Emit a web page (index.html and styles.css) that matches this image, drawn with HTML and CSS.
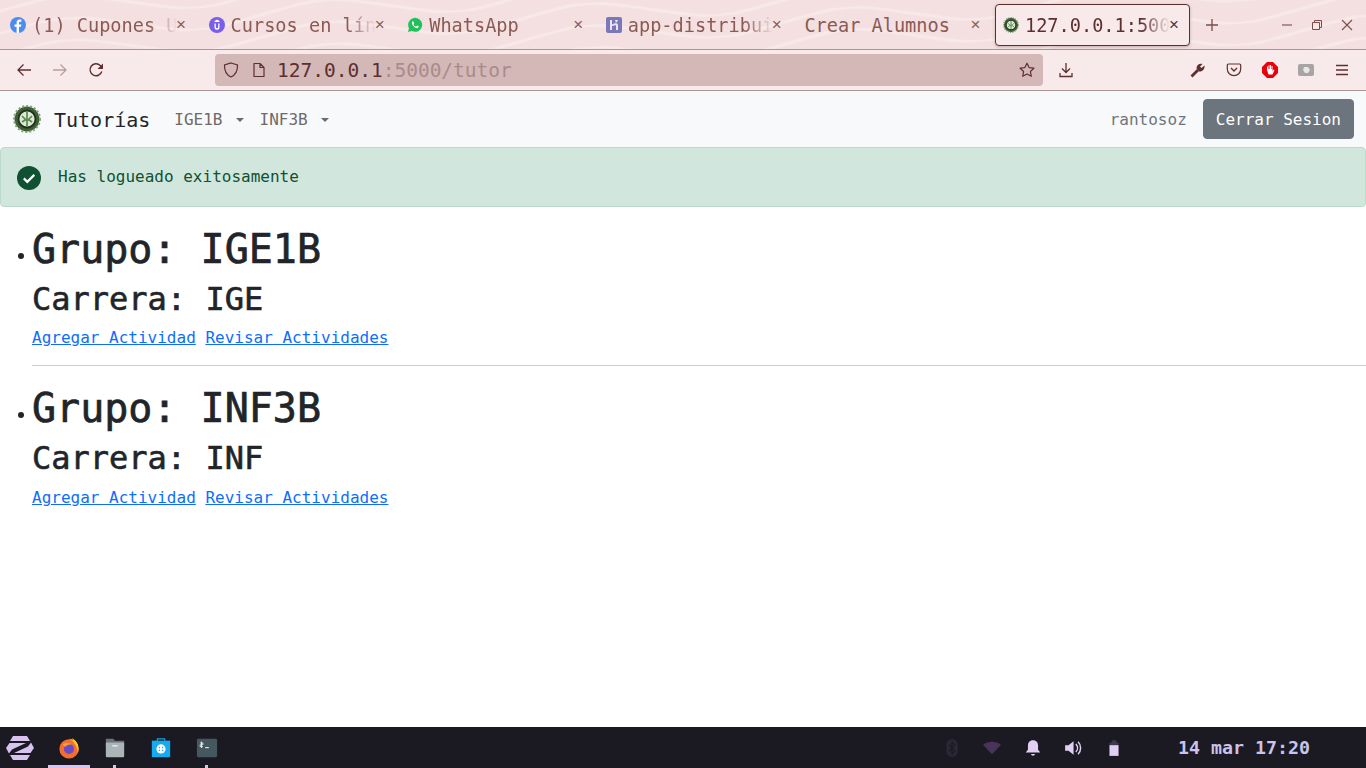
FILE: index.html
```html
<!DOCTYPE html>
<html lang="es">
<head>
  <meta charset="UTF-8" />
  <title>Tutorías</title>
  <link rel="stylesheet" href="styles.css">
</head>
<body>
  <svg class="defs" width="0" height="0">
    <symbol id="logo" viewBox="0 0 28 28">
      <circle cx="14" cy="14" r="12.5" fill="#3f5f35"/>
      <circle cx="14" cy="14" r="13" fill="none" stroke="#8aa082" stroke-width="2" stroke-dasharray="2 2"/>
      <circle cx="14" cy="14" r="8.500" fill="#dfe8d8"/>
      <circle cx="14" cy="14" r="8.500" fill="none" stroke="#1f3319" stroke-width="1.800"/>
      <path d="M14 7v14M9 11l5 5 5-5M9 17l3-2M19 17l-3-2" fill="none" stroke="#5b8a4c" stroke-width="1.700"/>
    </symbol>
    <pattern id="waves" width="260" height="22" patternUnits="userSpaceOnUse" patternTransform="rotate(-4)">
      <path d="M0 11C65-3 65-3 130 11S195 25 260 11" fill="none" stroke="#f8e9e9" stroke-width="3"/>
    </pattern>
  </svg>

  <header class="tabbar">
    <svg class="tabbar-bg" width="100%" height="100%"><rect width="100%" height="100%" fill="url(#waves)"/></svg>
    <div class="tab">
      <svg class="favicon" viewBox="0 0 16 16"><circle cx="8" cy="8" r="8" fill="#4a8cf0"/><path d="M9 16V9.800h2l.4-2.400H9V6c0-.8.3-1.200 1.200-1.200h1.200V2.700C11 2.600 10.300 2.500 9.600 2.500 7.800 2.500 6.600 3.600 6.600 5.600v1.800H4.500v2.400h2.100V16z" fill="#fff"/></svg>
      <span class="tab-title">(1) Cupones Udemy</span>
      <span class="tab-close">×</span>
    </div>
    <div class="tab">
      <svg class="favicon" viewBox="0 0 16 16"><circle cx="8" cy="8" r="8" fill="#7a5ee8"/><path d="M5.500 6.500v3.700a2.500 2.500 0 0 0 5 0V6.500H9.200v3.500a1.200 1.200 0 0 1-2.400 0V6.500zM8 2.600l2.500 1.500v1H5.500v-1z" fill="#fff"/></svg>
      <span class="tab-title">Cursos en línea</span>
      <span class="tab-close">×</span>
    </div>
    <div class="tab">
      <svg class="favicon" viewBox="0 0 16 16"><path d="M1 15l1-3.800A7 7 0 1 1 4.800 14z" fill="#1fc15b"/><path d="M5.600 4.300c-1 .8-1 2.200 0 3.700 1 1.500 2.400 2.800 3.900 3.100 1.300.2 2.300-.5 2.400-1.500l-1.800-1-.8.800C8.300 9.900 7 8.700 6.500 7.500l.7-.9-.8-2.100z" fill="#fff"/></svg>
      <span class="tab-title">WhatsApp</span>
      <span class="tab-close">×</span>
    </div>
    <div class="tab">
      <svg class="favicon" viewBox="0 0 16 16"><rect width="16" height="16" rx="2" fill="#7b78b8"/><path d="M4 3h2v4.500c2-.9 4-1.500 5-1 1 .4 1 1.300 1 2.500v4h-2V9c0-1-1-.9-4 .3V13H4zM9 3h3c-.2 1-.7 1.800-1.500 2.400H9.300C9.800 4.700 9.200 3.800 9 3z" fill="#e6e6f4"/></svg>
      <span class="tab-title">app-distribuida</span>
      <span class="tab-close">×</span>
    </div>
    <div class="tab">
      <span class="tab-title tab-title-full">Crear Alumnos</span>
      <span class="tab-close">×</span>
    </div>
    <div class="tab tab-active">
      <svg class="favicon"><use href="#logo"/></svg>
      <span class="tab-title">127.0.0.1:5000/tutor</span>
      <span class="tab-close">×</span>
    </div>
    <svg class="new-tab" viewBox="0 0 14 14"><path d="M7 1v12M1 7h12" stroke="#7a4d4d" stroke-width="1.300" fill="none"/></svg>
    <div class="window-controls">
      <svg viewBox="0 0 12 12"><path d="M1 6h10" stroke="#7a4d4d" stroke-width="1.100"/></svg>
      <svg viewBox="0 0 12 12"><path d="M1.500 3.500h7v7h-7zM3.500 3.500v-2h7v7h-2" fill="none" stroke="#7a4d4d"/></svg>
      <svg viewBox="0 0 12 12"><path d="M1 1l10 10M11 1L1 11" stroke="#7a4d4d" stroke-width="1.100"/></svg>
    </div>
  </header>

  <div class="toolbar">
    <button class="tool"><svg viewBox="0 0 16 16"><path d="M15 8H2M7.500 2.500L2 8l5.500 5.500" fill="none" stroke="#5d2f2f" stroke-width="1.300"/></svg></button>
    <button class="tool"><svg viewBox="0 0 16 16"><path d="M1 8h13M8.500 2.500L14 8l-5.500 5.500" fill="none" stroke="#b99c9c" stroke-width="1.300"/></svg></button>
    <button class="tool"><svg viewBox="0 0 16 16"><path d="M13.800 9.500A6 6 0 1 1 12.300 3.500L14.500 6" fill="none" stroke="#5d2f2f" stroke-width="1.400"/><path d="M15 1.500v5.500H9.500z" fill="#5d2f2f"/></svg></button>
    <div class="urlbar">
      <svg class="url-icon" viewBox="0 0 16 16"><path d="M8 1l6.500 2c.2 5.500-1.800 9.800-6.500 12C3.300 12.800 1.300 8.500 1.500 3z" fill="none" stroke="#5d2f2f" stroke-width="1.200"/></svg>
      <svg class="url-icon url-page" viewBox="0 0 16 16"><path d="M3 1.500h6l4 4v9H3zM9 1.500v4h4" fill="none" stroke="#5d2f2f" stroke-width="1.200" stroke-linejoin="round"/></svg>
      <span class="url-text">127.0.0.1<span class="url-dim">:5000/tutor</span></span>
      <svg class="url-icon" viewBox="0 0 16 16"><path d="M8 1.200l2.100 4.400 4.800.6-3.500 3.300.9 4.800L8 12l-4.300 2.300.9-4.800L1.100 6.200l4.800-.6z" fill="none" stroke="#5d2f2f" stroke-width="1.200" stroke-linejoin="round"/></svg>
    </div>
    <button class="tool"><svg viewBox="0 0 16 16"><path d="M8 1v9M4 6.500L8 10.500l4-4M2 11v3.500h12V11" fill="none" stroke="#5d2f2f" stroke-width="1.300"/></svg></button>
    <div class="tool-gap"></div>
    <button class="tool"><svg viewBox="0 0 16 16"><path d="M1.500 14.500L8 8" stroke="#5d2f2f" stroke-width="2.800"/><path d="M6.500 6.500C6.500 3 9.500 1 12.500 2L10 4.500 11.500 6 14.500 3.500C15 7 12.500 10 9 9.500z" fill="#5d2f2f"/></svg></button>
    <button class="tool"><svg viewBox="0 0 16 16"><path d="M2.500 2h11c.8 0 1.200.5 1.200 1.200V7a6.700 6.700 0 0 1-13.400 0V3.200C1.300 2.500 1.700 2 2.500 2z" fill="none" stroke="#5d2f2f" stroke-width="1.200"/><path d="M5 6l3 3 3-3" fill="none" stroke="#5d2f2f" stroke-width="1.400"/></svg></button>
    <button class="tool"><svg viewBox="0 0 16 16"><path d="M5 0h6l5 5v6l-5 5H5l-5-5V5z" fill="#e8000c"/><path d="M5 8V4.500h1V7h.5V3.200h1V7H8V3h1v4h.5V4h1v5l1-1.500 1 .5-2 4.500H6.500z" fill="#fff"/></svg></button>
    <button class="tool"><svg viewBox="0 0 16 16"><rect x="0" y="2" width="16" height="12" rx="2" fill="#a8a4a4"/><path d="M6 5h4l2 3-2 3H7L5 8z" fill="#e8e6e6"/></svg></button>
    <button class="tool"><svg viewBox="0 0 16 16"><path d="M2 3.500h12M2 8h12M2 12.500h12" stroke="#5d2f2f" stroke-width="1.300"/></svg></button>
  </div>

  <nav class="navbar">
    <svg class="brand-logo"><use href="#logo"/></svg>
    <a class="brand" href="#">Tutorías</a>
    <a class="nav-link" href="#">IGE1B</a>
    <a class="nav-link" href="#">INF3B</a>
    <span class="nav-user">rantosoz</span>
    <button class="btn-logout">Cerrar Sesion</button>
  </nav>

  <main class="content">
    <div class="alert">
      <svg class="alert-icon" viewBox="0 0 24 24"><circle cx="12" cy="12" r="12" fill="#0f5132"/><path d="M6.800 12.400l3.500 3.500 7-7" fill="none" stroke="#fff" stroke-width="2.200"/></svg>
      <span class="alert-text">Has logueado exitosamente</span>
    </div>
    <ul class="groups">
      <li>
        <h1>Grupo: IGE1B</h1>
        <h2>Carrera: IGE</h2>
        <a href="#">Agregar Actividad</a>
        <a href="#">Revisar Actividades</a>
        <hr>
      </li>
      <li>
        <h1>Grupo: INF3B</h1>
        <h2>Carrera: INF</h2>
        <a href="#">Agregar Actividad</a>
        <a href="#">Revisar Actividades</a>
      </li>
    </ul>
  </main>

  <footer class="taskbar">
    <svg class="zorin" viewBox="0 0 28 24"><path d="M7 0h14l3 5H4zM7 24h14l3-5H4z" fill="#d8c2ee"/><path d="M3.500 7H20L6 13.500 3 17.500 0 12zM24.500 17H8L22 10.500 25 6.500 28 12z" fill="#d8c2ee"/></svg>
    <div class="launcher launcher-active">
      <svg viewBox="0 0 24 24"><circle cx="12" cy="13" r="10.500" fill="#f3702c"/><path d="M12 2c5 0 10.500 4 10.500 11 0 2-.5 3.500-1 4.500C21 11 18 5 12 2z" fill="#fcb42a"/><path d="M15 1c4 2 7 6 7 11-2-4-4-7-7-11z" fill="#fbd03a"/><circle cx="12" cy="13" r="5.500" fill="#6d4bc8"/><path d="M5 8c3-2 7-2 10 0-3 0-6 1-7 3z" fill="#f9a12c"/></svg>
    </div>
    <div class="launcher launcher-open">
      <svg viewBox="0 0 24 24"><path d="M2 2h8l2 2h10v6H2z" fill="#6b7477"/><rect x="2" y="6" width="20" height="16" rx="1" fill="#abb5b7"/><rect x="9" y="9" width="6" height="1.300" fill="#f2f4f4"/></svg>
    </div>
    <div class="launcher">
      <svg viewBox="0 0 24 24"><path d="M8 5V2h8v3" fill="none" stroke="#1a9fe0" stroke-width="1.300"/><rect x="2" y="4" width="20" height="18" fill="#16aaf0"/><circle cx="12" cy="13" r="5" fill="#fff"/><circle cx="10.300" cy="11.500" r=".8" fill="#16aaf0"/><circle cx="13.700" cy="11.500" r=".8" fill="#16aaf0"/><circle cx="10.300" cy="14.500" r=".8" fill="#16aaf0"/><circle cx="13.700" cy="14.500" r=".8" fill="#16aaf0"/></svg>
    </div>
    <div class="launcher launcher-open">
      <svg viewBox="0 0 24 24"><rect x="1" y="2" width="22" height="20" rx="1.500" fill="#45575f"/><path d="M6 5v7M4.500 6.500h3v2h-3v2h3" fill="none" stroke="#e8eef0" stroke-width="1"/><rect x="10" y="11" width="4" height="1.200" fill="#e8eef0"/></svg>
    </div>
    <div class="tray">
      <svg viewBox="0 0 16 16"><rect x="3" y="0" width="10" height="16" rx="5" fill="#2a2836"/><path d="M5.500 5l5 6L8 13.500v-11L10.500 5l-5 6" fill="none" stroke="#1b1a22"/></svg>
      <svg viewBox="0 0 16 16"><path d="M0 5c4.500-3.500 11.500-3.500 16 0l-8 8.500z" fill="#4a3358"/></svg>
      <svg viewBox="0 0 16 16"><path d="M8 1c3 0 4.500 2 4.500 5v3.500L14.500 12h-13l2-2.500V6C3.500 3 5 1 8 1zM6.300 13.300h3.400c0 2-3.400 2-3.400 0z" fill="#e0cff2"/></svg>
      <svg viewBox="0 0 16 16"><path d="M1 5.500h3L8.500 2v12L4 10.500H1z" fill="#e0cff2"/><path d="M10.500 4.500c2 2 2 5 0 7M12.500 2.500c3 3 3 8 0 11" fill="none" stroke="#e0cff2" stroke-width="1.300"/></svg>
      <svg viewBox="0 0 16 16"><path d="M6 1h4v2h2v12H4V3h2z" fill="#3d3a4a"/><path d="M4 5.500h8V15H4z" fill="#e0cff2"/></svg>
    </div>
    <div class="clock">14 mar 17:20</div>
  </footer>
</body>
</html>
```

FILE: styles.css
```css
* {
  box-sizing: border-box;
}
body {
  margin: 0;
  height: 100vh;
  display: flex;
  flex-direction: column;
  overflow: hidden;
  background: #fff;
  color: #212529;
  font-family: 'DejaVu Sans Mono', 'Liberation Mono', monospace;
  font-size: 16px;
  line-height: 1.5;
}
.defs {
  position: absolute;
}

/* browser tabs */
.tabbar {
  position: relative;
  flex: none;
  height: 50px;
  display: flex;
  align-items: center;
  padding-left: 2px;
  background: #f4e0e0;
  border-bottom: 1px solid #ab9696;
}
.tabbar-bg {
  position: absolute;
  left: 0;
  top: 0;
}
.tab {
  position: relative;
  flex: none;
  width: 195px;
  height: 42px;
  margin-right: 3.6px;
  padding: 0 8px;
  display: flex;
  align-items: center;
  color: #8a5a55;
  font-size: 18.6px;
}
.tab-active {
  background: #f8eaea;
  border: 1px solid #5d2f2f;
  border-radius: 4px;
  color: #5d2f2f;
  padding: 0 7px;
  box-shadow: 0 1px 3px rgba(93, 47, 47, 0.3);
}
.favicon {
  flex: none;
  width: 16px;
  height: 16px;
  margin-right: 6px;
}
.tab-title {
  flex: 1;
  min-width: 0;
  padding-top: 2px;
  white-space: nowrap;
  overflow: hidden;
  -webkit-mask-image: linear-gradient(to right, #000 80%, transparent 100%);
  mask-image: linear-gradient(to right, #000 80%, transparent 100%);
}
.tab-title-full {
  -webkit-mask-image: none;
  mask-image: none;
}
.tab-close {
  flex: none;
  width: 16px;
  margin-left: -4px;
  text-align: center;
  font-size: 17px;
  font-family: 'Liberation Sans', sans-serif;
}
.new-tab {
  position: relative;
  flex: none;
  width: 14px;
  height: 14px;
  margin-left: 11px;
}
.window-controls {
  position: relative;
  margin-left: auto;
  display: flex;
  gap: 18px;
  padding-right: 13px;
}
.window-controls svg {
  width: 12px;
  height: 12px;
}

/* browser toolbar */
.toolbar {
  flex: none;
  height: 41px;
  display: flex;
  align-items: center;
  padding: 0 6px;
  background: #f8eaea;
  border-bottom: 1px solid #ab9696;
}
.tool {
  flex: none;
  width: 36px;
  height: 32px;
  padding: 0;
  border: 0;
  background: none;
  display: flex;
  align-items: center;
  justify-content: center;
}
.tool svg {
  width: 16px;
  height: 16px;
}
.tool-gap {
  flex: none;
  width: 96px;
}
.urlbar {
  flex: 1;
  height: 32px;
  margin: 0 5px 0 101px;
  padding: 0 8px;
  display: flex;
  align-items: center;
  background: #d4b8b8;
  border-radius: 4px;
  color: #5d2f2f;
  font-size: 19.5px;
}
.url-icon {
  flex: none;
  width: 16px;
  height: 16px;
}
.url-page {
  margin: 0 10px 0 12px;
}
.url-text {
  flex: 1;
  padding-top: 2px;
  white-space: nowrap;
}
.url-dim {
  color: #a98b8b;
}

/* page */
.navbar {
  flex: none;
  height: 56px;
  display: flex;
  align-items: center;
  padding: 0 12px 0 13px;
  background: #f8f9fa;
}
.brand-logo {
  width: 28px;
  height: 28px;
  margin-right: 13px;
}
.brand {
  margin-right: 24px;
  padding-top: 2px;
  color: #212529;
  font-size: 20px;
  text-decoration: none;
}
.nav-link {
  margin-right: 16px;
  padding-top: 2px;
  color: #6f6a68;
  text-decoration: none;
}
.nav-link::after {
  content: "";
  display: inline-block;
  margin-left: 13px;
  vertical-align: 3px;
  border-top: 4px solid #6f6a68;
  border-left: 4px solid transparent;
  border-right: 4px solid transparent;
}
.nav-user {
  margin-left: auto;
  margin-right: 16px;
  padding-top: 2px;
  color: #6c757d;
}
.btn-logout {
  height: 40px;
  padding: 2px 12px 0;
  border: 1px solid #6c757d;
  border-radius: 4px;
  background: #6c757d;
  color: #fff;
  font: inherit;
}
.content {
  flex: 1;
  min-height: 0;
}
.alert {
  display: flex;
  align-items: flex-start;
  margin-bottom: 16px;
  padding: 16px;
  height: 60px;
  background: #d1e7dd;
  border: 1px solid #badbcc;
  border-radius: 4px;
  color: #0f5132;
}
.alert-icon {
  flex: none;
  width: 24px;
  height: 24px;
  margin: 2px 17px 0 0;
}
.alert-text {
  padding-top: 1px;
}
.groups {
  margin: 0;
  padding-left: 32px;
  list-style: none;
}
.groups li {
  position: relative;
}
.groups li::before {
  content: "";
  position: absolute;
  left: -14px;
  top: 30px;
  width: 6px;
  height: 6px;
  border-radius: 50%;
  background: #212529;
}
h1 {
  margin: 0 0 6px;
  padding-top: 2px;
  font-size: 40px;
  font-weight: 500;
  line-height: 48px;
  -webkit-text-stroke: 0.7px #212529;
  box-sizing: content-box;
  height: 48px;
}
h2 {
  margin: 0 0 8px;
  padding-top: 1px;
  font-size: 32px;
  font-weight: 500;
  line-height: 38.4px;
  -webkit-text-stroke: 0.6px #212529;
}
.groups a {
  color: #0d6efd;
}
hr {
  margin: 15px 0 16px;
  border: 0;
  border-top: 1px solid #ccc;
}

/* desktop panel */
.taskbar {
  flex: none;
  height: 41px;
  display: flex;
  align-items: center;
  background: #1b1a22;
}
.zorin {
  flex: none;
  width: 28px;
  height: 24px;
  margin: 0 12px 0 6px;
}
.launcher {
  position: relative;
  flex: none;
  width: 46px;
  height: 41px;
  display: flex;
  align-items: center;
  justify-content: center;
}
.launcher svg {
  width: 22px;
  height: 22px;
}
.launcher-active::after {
  content: "";
  position: absolute;
  left: 2px;
  right: 2px;
  bottom: 0;
  height: 3px;
  background: #d8c2ee;
}
.launcher-open::after {
  content: "";
  position: absolute;
  left: 21px;
  bottom: 0;
  width: 3px;
  height: 3px;
  background: #d8c2ee;
}
.tray {
  margin-left: auto;
  display: flex;
  gap: 22.5px;
  margin-right: 55px;
}
.tray svg {
  width: 18px;
  height: 18px;
}
.clock {
  margin-right: 56px;
  color: #c9c3ee;
  font-size: 18.3px;
  font-weight: 700;
}
```
